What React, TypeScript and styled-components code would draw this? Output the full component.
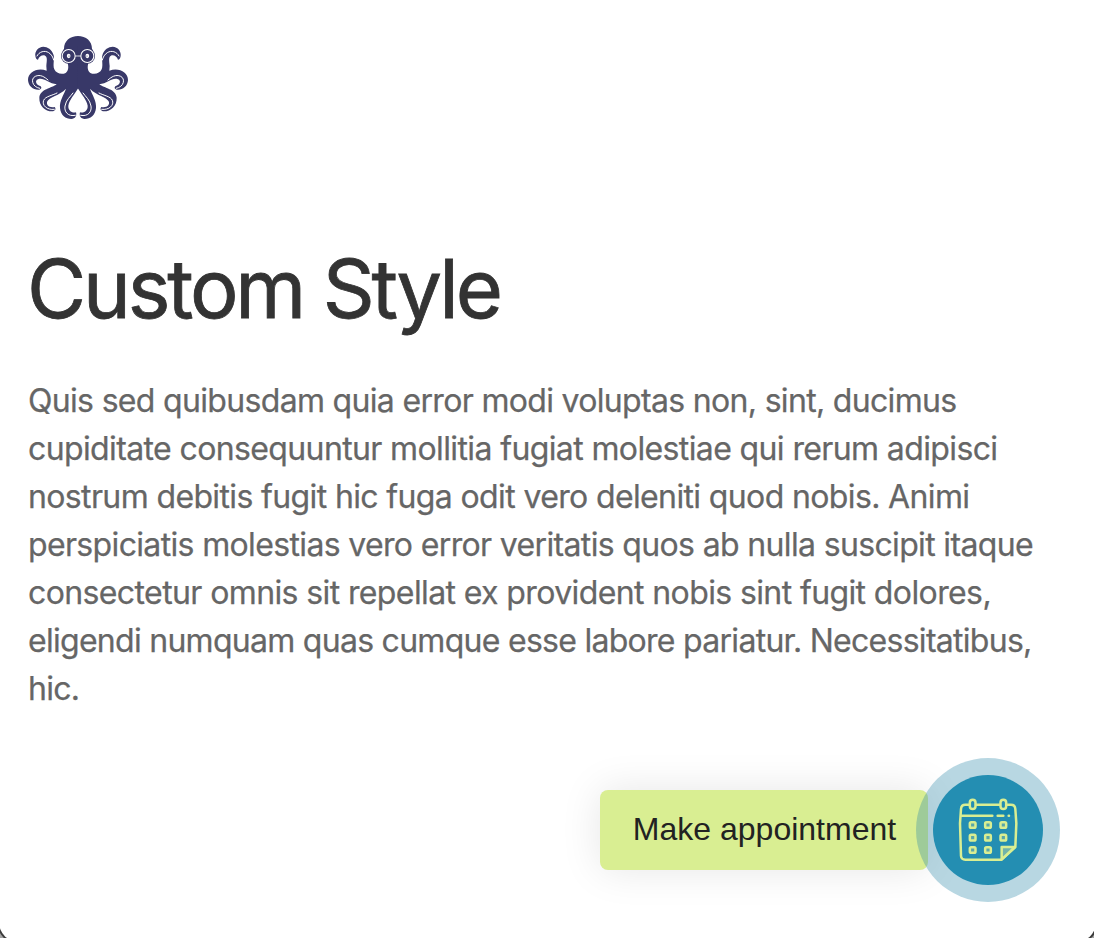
import React from "react";
import styled, { createGlobalStyle } from "styled-components";

const GlobalStyle = createGlobalStyle`
  * { box-sizing: border-box; }
  html, body { margin: 0; height: 938px; overflow: hidden; background: #a3a3a3; }
`;

const Window = styled.main`
  width: 1097px;
  height: 942px;
  margin-left: -1px;
  padding: 36px 36px 0 29px;
  background: #fff;
  border-radius: 0 0 20px 20px;
  box-shadow: 0 0 0 2px #3c3c3c;
  font-family: Inter, "Liberation Sans", sans-serif;
`;

const Logo = styled.svg`
  display: block;
  width: 100px;
  height: 84px;
`;

const Title = styled.h1`
  margin: 122px 0 0 -1px;
  font-size: 81px;
  line-height: 95px;
  font-weight: 400;
  letter-spacing: -3.15px;
  -webkit-text-stroke: 0.8px #333;
  color: #333;
`;

const Copy = styled.p`
  margin: 40px 0 0;
  font-size: 32px;
  line-height: 48px;
  color: #666;
  -webkit-text-stroke: 0.25px #666;
`;

const Line = styled.span<{ $spacing: number }>`
  display: block;
  white-space: nowrap;
  letter-spacing: ${({ $spacing }) => $spacing}px;
`;

const Actions = styled.div`
  display: flex;
  justify-content: flex-end;
  align-items: center;
  margin-top: 45px;
`;

const ActionLabel = styled.button`
  width: 328px;
  height: 80px;
  margin-right: -12px;
  padding: 0 0 2px 1px;
  border: 0;
  border-radius: 8px;
  background: #d9ee92;
  color: #222;
  box-shadow: 0 0 40px rgba(0, 0, 0, 0.1);
  font: 32px "Liberation Sans", Arial, sans-serif;
`;

const Halo = styled.div`
  z-index: 1;
  display: grid;
  place-items: center;
  width: 144px;
  height: 144px;
  border-radius: 50%;
  background: rgba(40, 134, 167, 0.33);
`;

const RoundButton = styled.button`
  display: grid;
  place-items: center;
  width: 110px;
  height: 110px;
  padding: 0;
  border: 0;
  border-radius: 50%;
  background: #248eb2;
`;

const CalendarSvg = styled.svg`
  display: block;
  width: 80px;
  height: 80px;
`;

const lines: { text: string; spacing: number }[] = [
  { text: "Quis sed quibusdam quia error modi voluptas non, sint, ducimus", spacing: -0.675 },
  { text: "cupiditate consequuntur mollitia fugiat molestiae qui rerum adipisci", spacing: -0.62 },
  { text: "nostrum debitis fugit hic fuga odit vero deleniti quod nobis. Animi", spacing: -0.63 },
  { text: "perspiciatis molestias vero error veritatis quos ab nulla suscipit itaque", spacing: -0.65 },
  { text: "consectetur omnis sit repellat ex provident nobis sint fugit dolores,", spacing: -0.61 },
  { text: "eligendi numquam quas cumque esse labore pariatur. Necessitatibus,", spacing: -0.72 },
  { text: "hic.", spacing: -0.7 },
];

const OctopusHalf = () => (
  <>
    <path
      fill="#383868"
      d="M181 30C155 30 138 46 138 68C134 74 132 82 132 90C133 102 141 109 149 111C152 122 152 134 143 141C130 147 114 142 109 130C104 118 110 98 107 88C102 70 88 62 76 62C60 63 50 76 52 90C53 97 56 101 60 101C63 92 70 87 79 88C90 92 86 106 85 120L86 134C58 124 30 138 30 162C31 181 47 193 64 191C70 190 72 185 68 181C53 176 50 164 60 160C76 153 92 173 116 175C102 187 66 189 64 215C63 240 82 256 102 256C112 255 115 249 110 243C94 246 83 238 88 226C94 213 124 209 144 188C137 208 124 224 126 246C128 268 143 279 160 279C172 278 177 270 174 259C160 262 150 252 151 239C154 222 168 207 181 186Z"
    />
    <g fill="none" stroke="#fff" strokeWidth="3" strokeLinecap="round">
      <path d="M57 90C63 77 80 72 92 80C100 85 105 93 107 102" />
      <path d="M65 187C42 183 37 158 52 151C67 144 80 153 90 162" />
      <path d="M109 250C86 253 71 237 77 223C82 211 102 209 117 201" />
      <path d="M172 268C150 273 138 257 141 240C144 222 157 212 165 201" />
    </g>
    <circle cx="152" cy="90" r="23" fill="#383868" />
    <circle cx="152" cy="90" r="19.500" fill="none" stroke="#fff" strokeWidth="3.200" />
    <ellipse cx="152" cy="90" rx="5.500" ry="6.500" fill="#fff" />
    <circle cx="153" cy="90" r="1.600" fill="#383868" />
    <path d="M172 90H181" stroke="#fff" strokeWidth="2.600" />
  </>
);

const Octopus = () => (
  <Logo viewBox="30 30 300 252" role="img" aria-label="Octopus">
    <OctopusHalf />
    <g transform="translate(360 0) scale(-1 1)">
      <OctopusHalf />
    </g>
  </Logo>
);

const dates = [
  [74, 105], [120, 105], [166, 105],
  [74, 143], [120, 143], [166, 143],
  [74, 180], [120, 180],
];

const Calendar = () => (
  <CalendarSvg viewBox="0 0 240 240" aria-hidden="true">
    <path d="M40 76V53Q40 44 50 44H192Q202 44 202 53V76Z" fill="#1588ae" />
    <g fill="none" stroke="#d9ee92" strokeWidth="7.500" strokeLinecap="round" strokeLinejoin="round">
      <path d="M64 44H52Q40 44 39 57L36 100L39 198Q40 209 52 209H161L202 171L205 100L202 57Q201 44 189 44H177M84 44H156" />
      <path d="M41 77H133M149 77H166M182 77H183" />
      <path d="M161 208V171H201Z" fill="#71b3a9" />
      <rect x="65.500" y="29" width="17" height="28" rx="8.500" fill="#248eb2" />
      <rect x="157.500" y="29" width="17" height="28" rx="8.500" fill="#248eb2" />
      {dates.map(([x, y]) => (
        <rect key={`${x}-${y}`} x={x - 8.5} y={y - 8.5} width="17" height="17" rx="4" fill="#58a7a9" strokeWidth="7.500" />
      ))}
    </g>
  </CalendarSvg>
);

export default function App() {
  return (
    <>
      <GlobalStyle />
      <Window>
        <Octopus />
        <Title>Custom Style</Title>
        <Copy>
          {lines.map(({ text, spacing }) => (
            <Line key={text} $spacing={spacing}>{text}</Line>
          ))}
        </Copy>
        <Actions>
          <ActionLabel>Make appointment</ActionLabel>
          <Halo>
            <RoundButton aria-label="Make appointment">
              <Calendar />
            </RoundButton>
          </Halo>
        </Actions>
      </Window>
    </>
  );
}
